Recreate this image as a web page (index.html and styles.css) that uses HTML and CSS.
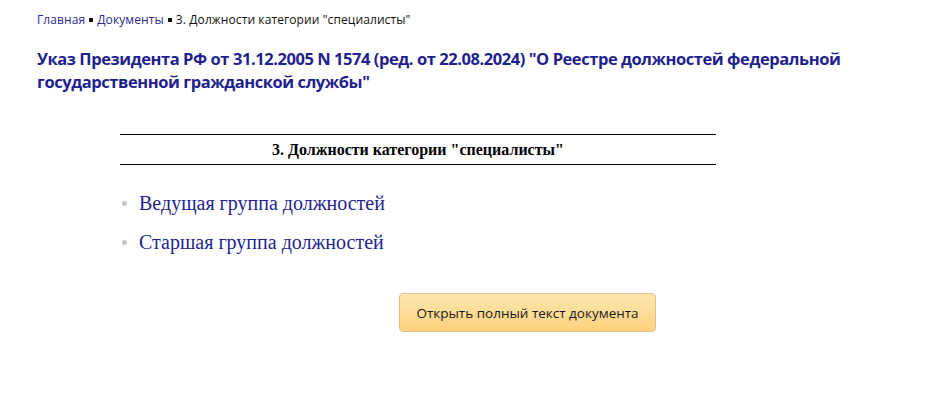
FILE: index.html
```html
<!DOCTYPE html>
<html lang="ru">
<head>
  <meta charset="UTF-8" />
  <title>3. Должности категории "специалисты"</title>
  <link rel="stylesheet" href="styles.css">
</head>
<body>
  <div class="page">
    <div class="crumbs">
      <a href="#">Главная</a>
      <span class="sep"></span>
      <a href="#">Документы</a>
      <span class="sep"></span>
      <span class="current">3. Должности категории "специалисты"</span>
    </div>

    <h1 class="doc-title">Указ Президента РФ от 31.12.2005 N 1574 (ред. от 22.08.2024) "О Реестре должностей федеральной государственной гражданской службы"</h1>

    <div class="doc">
      <div class="section-head">3. Должности категории "специалисты"</div>

      <ul class="links">
        <li><a href="#">Ведущая группа должностей</a></li>
        <li><a href="#">Старшая группа должностей</a></li>
      </ul>

      <div class="actions">
        <button class="open-btn">Открыть полный текст документа</button>
      </div>
    </div>
  </div>
</body>
</html>
```

FILE: styles.css
```css
* {
  box-sizing: border-box;
}

body {
  margin: 0;
  background: #ffffff;
  color: #111111;
  font-family: "Open Sans", "Noto Sans", sans-serif;
}

.page {
  padding: 12px 37px 0 37px;
}

.crumbs {
  font-size: 12px;
  line-height: 16px;
  display: flex;
  align-items: center;
  gap: 4px;
  color: #111111;
  letter-spacing: 0.1px;
}

.crumbs a {
  color: #2a2a8c;
  text-decoration: none;
}

.crumbs .sep {
  width: 4px;
  height: 4px;
  background: #111111;
  display: inline-block;
}

.doc-title {
  margin: 19px 0 0 0;
  font-size: 16.5px;
  line-height: 23px;
  font-weight: 700;
  letter-spacing: -0.44px;
  color: #1f1f8f;
  max-width: 830px;
}

.doc {
  margin: 41px 0 0 83px;
  width: 596px;
}

.section-head {
  border-top: 1px solid #000000;
  border-bottom: 1px solid #000000;
  text-align: center;
  font-family: "Liberation Serif", "Times New Roman", serif;
  font-weight: 700;
  font-size: 16px;
  line-height: 29px;
  color: #000000;
}

.links {
  list-style: none;
  margin: 19px 0 0 0;
  padding: 0;
}

.links li {
  display: flex;
  align-items: center;
  gap: 12px;
  height: 39px;
  font-family: "Liberation Serif", "Times New Roman", serif;
  font-size: 20px;
}

.links li::before {
  content: "";
  width: 5px;
  height: 5px;
  border-radius: 50%;
  background: #c4c4c8;
  margin-left: 2px;
}

.links a {
  color: #1f1f8f;
  text-decoration: none;
}

.actions {
  margin-top: 31px;
  padding-left: 279px;
}

.open-btn {
  width: 257px;
  height: 39px;
  font-family: "Open Sans", "Noto Sans", sans-serif;
  font-size: 13.5px;
  color: #1a1a1a;
  background: linear-gradient(#ffe6b0, #ffd27e);
  border: 1px solid #dcc08a;
  border-radius: 4px;
  cursor: pointer;
}
```
